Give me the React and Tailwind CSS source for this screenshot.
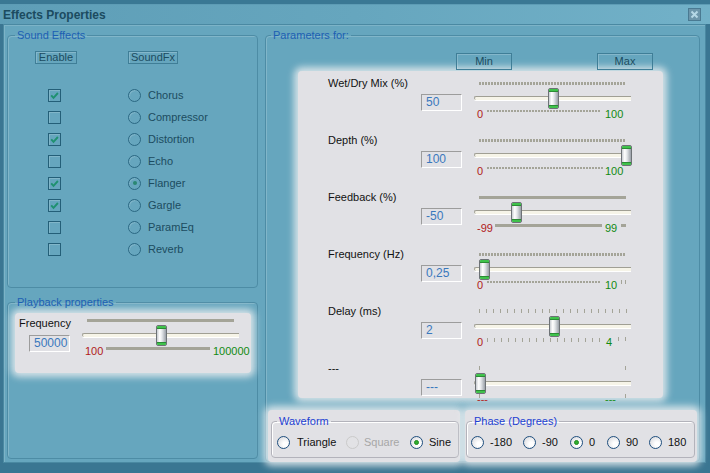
import React from "react";

function TopLine({ type }) {
  if (type === "dashed")
    return <div className="w-[147px] h-[3px] bg-[repeating-linear-gradient(90deg,#a4a498_0px,#a4a498_2px,transparent_2px,transparent_3px)]" />;
  if (type === "solid") return <div className="w-[147px] h-[3px] bg-[#a4a498]" />;
  if (type === "sparse")
    return <div className="w-[148px] h-[4px] bg-[repeating-linear-gradient(90deg,#a4a498_0px,#a4a498_1px,transparent_1px,transparent_7px)]" />;
  return (
    <div className="w-[147px] h-[4px] flex justify-between">
      <div className="w-[1px] bg-[#a4a498]" />
      <div className="w-[1px] bg-[#a4a498]" />
    </div>
  );
}

function Thumb({ left }) {
  return (
    <div
      className="absolute top-[-9px] w-[11px] h-[21px] rounded-[2px] border border-[#6d7276] bg-[linear-gradient(90deg,#c9cdd2_0%,#ffffff_30%,#e4e7ea_55%,#9aa0a8_100%)] flex flex-col justify-between overflow-hidden"
      style={{ left }}
    >
      <div className="h-[3px] bg-[#3fc24b] border-b border-[#2a8c34]" />
      <div className="h-[3px] bg-[#3fc24b] border-t border-[#2a8c34]" />
    </div>
  );
}

function Track({ pos }) {
  return (
    <div className="relative h-[4px] w-[157px] rounded-l-full border-t border-[#a09f94] border-l border-l-[#a09f94] bg-[#f6f4e8] shadow-[0_1px_0_#ffffff]">
      <Thumb left={pos} />
    </div>
  );
}

function Extra({ kind }) {
  if (kind === "block") return <div className="mt-[2px] mr-[5px] w-[5px] h-[3px] bg-[#a4a498]" />;
  if (kind === "pair")
    return (
      <div className="mt-[1px] mr-[5px] flex gap-[3px]">
        <div className="w-[1px] h-[4px] bg-[#a4a498]" />
        <div className="w-[1px] h-[4px] bg-[#a4a498]" />
      </div>
    );
  if (kind === "sparse")
    return (
      <div className="mt-[1px] mr-[5px] flex gap-[6px]">
        <div className="w-[1px] h-[4px] bg-[#a4a498]" />
        <div className="w-[1px] h-[4px] bg-[#a4a498]" />
      </div>
    );
  return null;
}

function BottomLine({ type, w }) {
  if (type === "dashed")
    return <div className={`${w} h-[2px] bg-[repeating-linear-gradient(90deg,#a4a498_0px,#a4a498_2px,transparent_2px,transparent_3px)]`} />;
  if (type === "solid") return <div className={`${w} h-[3px] bg-[#a4a498]`} />;
  if (type === "sparse")
    return <div className={`${w} h-[4px] bg-[repeating-linear-gradient(90deg,#a4a498_0px,#a4a498_1px,transparent_1px,transparent_7px)]`} />;
  return null;
}

function Slider({ pos, top, bottom, minBox, lineW, maxPl, min, max, extra }) {
  return (
    <div className="w-[157px] flex flex-col">
      <div className="h-[5px] flex items-end pl-[5px]">
        <TopLine type={top} />
      </div>
      <div className="mt-[11px]">
        <Track pos={pos} />
      </div>
      {bottom === "ends" ? (
        <>
          <div className="mt-[9px] pl-[5px]">
            <TopLine type="ends" />
          </div>
          <div className="mt-[-5px] flex h-[13px] leading-[13px]">
            <div className={`${minBox} pl-[3px] text-[#b01a1a]`}>{min}</div>
            <div className={`${maxPl} text-[#128a12]`}>{max}</div>
          </div>
        </>
      ) : (
        <div className="mt-[8px] flex items-start h-[13px] leading-[13px]">
          <div className={`${minBox} shrink-0 pl-[3px] text-[#b01a1a]`}>{min}</div>
          <div className="mt-[2px] shrink-0">
            <BottomLine type={bottom} w={lineW} />
          </div>
          <div className={`${maxPl} shrink-0 text-[#128a12]`}>{max}</div>
          <div className="flex-1" />
          <Extra kind={extra} />
        </div>
      )}
    </div>
  );
}

function Input({ value }) {
  return (
    <div className="w-[41px] h-[17px] border border-t-[#9c9c9c] border-l-[#9c9c9c] border-b-white border-r-white pl-[4px] text-[12px] leading-[15px] text-[#3a78bd]">
      {value}
    </div>
  );
}

function TealCheck({ on }) {
  return (
    <span className="w-[13px] h-[13px] border border-[#245f78] shadow-[inset_1px_1px_0_rgba(255,255,255,0.18)] flex items-center justify-center">
      {on && (
        <svg width="9" height="9" viewBox="0 0 9 9">
          <path d="M1.2 4.3 L3.5 6.8 L7.9 2" stroke="#1f9170" strokeWidth="1.9" fill="none" />
        </svg>
      )}
    </span>
  );
}

function TealRadio({ on }) {
  return (
    <span className="w-[13px] h-[13px] rounded-full border-[1.5px] border-[#2b6883] shadow-[inset_1px_1px_0_rgba(255,255,255,0.15)] flex items-center justify-center">
      {on && <span className="w-[4px] h-[4px] rounded-full bg-[#2a8772]" />}
    </span>
  );
}

function LRadio({ on, disabled }) {
  return (
    <span
      className={`w-[13px] h-[13px] rounded-full border flex items-center justify-center shrink-0 ${
        disabled
          ? "border-[#cacaca] bg-[#e2e2e5]"
          : "border-[#1f4f7e] bg-[radial-gradient(circle_at_65%_65%,#ffffff_20%,#d3d4d9_100%)]"
      }`}
    >
      {on && <span className="w-[5px] h-[5px] rounded-full bg-[#2fae2f] border border-[#1f8a1f]" />}
    </span>
  );
}

const effects = [
  ["Chorus", true, false],
  ["Compressor", false, false],
  ["Distortion", true, false],
  ["Echo", false, false],
  ["Flanger", true, true],
  ["Gargle", true, false],
  ["ParamEq", false, false],
  ["Reverb", false, false],
];

const params = [
  { label: "Wet/Dry Mix (%)", value: "50", pos: 73, top: "dashed", bottom: "dashed", minBox: "w-[13px]", lineW: "w-[114px]", maxPl: "pl-[4px]", min: "0", max: "100" },
  { label: "Depth (%)", value: "100", pos: 146, top: "dashed", bottom: "dashed", minBox: "w-[13px]", lineW: "w-[116px]", maxPl: "pl-[2px]", min: "0", max: "100" },
  { label: "Feedback (%)", value: "-50", pos: 36, top: "solid", bottom: "solid", minBox: "w-[21px]", lineW: "w-[107px]", maxPl: "pl-[3px]", min: "-99", max: "99", extra: "block" },
  { label: "Frequency (Hz)", value: "0,25", pos: 4, top: "dashed", bottom: "dashed", minBox: "w-[13px]", lineW: "w-[114px]", maxPl: "pl-[4px]", min: "0", max: "10", extra: "pair" },
  { label: "Delay (ms)", value: "2", pos: 74, top: "sparse", bottom: "sparse", minBox: "w-[13px]", lineW: "w-[113px]", maxPl: "pl-[6px]", min: "0", max: "4", extra: "sparse" },
  { label: "---", value: "---", pos: 0, top: "ends", bottom: "ends", minBox: "w-[131px]", lineW: "", maxPl: "", min: "---", max: "---" },
];

const glow = "bg-[#e1e1e5] rounded-[4px] shadow-[0_0_7px_4px_rgba(232,236,239,0.85)]";

export default function App() {
  return (
    <div className="w-[710px] h-[473px] bg-[#3a7692] overflow-hidden font-['Liberation_Sans',Arial,sans-serif] text-[11px]">
      <div className="h-[5px] bg-[#3a7894] border-b border-[#5d9cb5]" />
      <div className="h-[19px] flex items-center justify-between pl-[3px] pr-[9px] bg-[linear-gradient(90deg,#5e9eb7,#66a6be_50%,#72b1c8)]">
        <span className="font-bold text-[12px] text-[#1b4b60] leading-[14px]">Effects Properties</span>
        <div className="w-[13px] h-[13px] border border-[#4a7a92] bg-[#6c96ab] flex items-center justify-center">
          <svg width="9" height="9" viewBox="0 0 9 9">
            <path d="M1.5 1.5 L7.5 7.5 M7.5 1.5 L1.5 7.5" stroke="#b5d8e6" strokeWidth="2" />
          </svg>
        </div>
      </div>
      <div className="ml-[3px] w-[703px] h-[439px] border border-[#4a89a2] bg-[#66a6be] flex pt-[4px] pl-[3px] gap-[7px] shadow-[inset_1px_1px_0_rgba(255,255,255,0.15)]">
        <div className="w-[251px] flex flex-col">
          <fieldset className="h-[259px] border border-[#4d8ca5] rounded-[4px] shadow-[inset_1px_1px_0_rgba(255,255,255,0.18)]">
            <legend className="ml-[7px] px-[2px] leading-[13px] text-[#1d5fb3]">Sound Effects</legend>
            <div className="mt-[9px] flex text-[#1c4c60]">
              <div className="ml-[27px] w-[42px] h-[13px] border border-[#3f7e97] shadow-[inset_1px_1px_0_rgba(255,255,255,0.2)] text-center leading-[11px]">Enable</div>
              <div className="ml-[51px] w-[50px] h-[13px] border border-[#3f7e97] shadow-[inset_1px_1px_0_rgba(255,255,255,0.2)] text-center leading-[11px]">SoundFx</div>
            </div>
            <div className="mt-[20px] flex flex-col">
              {effects.map(([name, on, sel]) => (
                <div key={name} className="h-[22px] flex items-center text-[#1c4c60]">
                  <div className="ml-[40px]">
                    <TealCheck on={on} />
                  </div>
                  <div className="ml-[67px]">
                    <TealRadio on={sel} />
                  </div>
                  <span className="ml-[7px] leading-[13px]">{name}</span>
                </div>
              ))}
            </div>
          </fieldset>
          <fieldset className="mt-[8px] h-[163px] border border-[#4d8ca5] rounded-[4px] shadow-[inset_1px_1px_0_rgba(255,255,255,0.18)]">
            <legend className="ml-[7px] px-[2px] leading-[13px] text-[#1d5fb3]">Playback properties</legend>
            <div className={`ml-[7px] mt-[4px] w-[236px] h-[60px] ${glow} flex`}>
              <div className="w-[67px] flex flex-col">
                <span className="ml-[4px] mt-[4px] leading-[13px] text-[#111]">Frequency</span>
                <div className="ml-[14px] mt-[5px]">
                  <Input value="50000" />
                </div>
              </div>
              <div className="mt-[4px]">
                <Slider pos={73} top="solid" bottom="solid" minBox="w-[24px]" lineW="w-[104px]" maxPl="pl-[3px]" min="100" max="100000" />
              </div>
            </div>
          </fieldset>
        </div>

        <fieldset className="w-[435px] h-[433px] border border-[#4d8ca5] rounded-[4px] shadow-[inset_1px_1px_0_rgba(255,255,255,0.18)]">
          <legend className="ml-[5px] px-[2px] leading-[13px] text-[#1d5fb3]">Parameters for:</legend>
          <div className="mt-[11px] flex h-[17px] text-[#1c4c60]">
            <div className="ml-[190px] w-[56px] h-[17px] border border-[#3f7e97] shadow-[inset_1px_1px_0_rgba(255,255,255,0.2)] text-center leading-[15px]">Min</div>
            <div className="ml-[85px] w-[56px] h-[17px] border border-[#3f7e97] shadow-[inset_1px_1px_0_rgba(255,255,255,0.2)] text-center leading-[15px]">Max</div>
          </div>
          <div className={`ml-[32px] mt-[1px] w-[365px] h-[327px] pt-[5px] ${glow} flex flex-col`}>
            {params.map((p) => (
              <div key={p.label} className="h-[57px] shrink-0 flex">
                <div className="w-[176px] flex flex-col">
                  <span className="ml-[30px] h-[14px] leading-[14px] text-[#111]">{p.label}</span>
                  <div className="ml-[123px] mt-[4px]">
                    <Input value={p.value} />
                  </div>
                </div>
                <div className="mt-[4px]">
                  <Slider {...p} />
                </div>
              </div>
            ))}
          </div>
          <div className="mt-[12px] flex">
            <div className={`ml-[2px] w-[192px] h-[52px] ${glow} pt-[5px] pl-[3px]`}>
              <fieldset className="w-[188px] h-[43px] border border-[#b3b3bb] rounded-[4px] shadow-[inset_1px_1px_0_#ffffff]">
                <legend className="ml-[5px] px-[2px] leading-[13px] text-[#1d3fd2]">Waveform</legend>
                <div className="mt-[8px] flex items-center h-[13px] leading-[13px] text-[#111]">
                  <div className="ml-[5px] w-[69px] flex items-center">
                    <LRadio />
                    <span className="ml-[7px]">Triangle</span>
                  </div>
                  <div className="w-[64px] flex items-center">
                    <LRadio disabled />
                    <span className="ml-[5px] text-[#a7a7a7]">Square</span>
                  </div>
                  <div className="flex items-center">
                    <LRadio on />
                    <span className="ml-[6px]">Sine</span>
                  </div>
                </div>
              </fieldset>
            </div>
            <div className={`ml-[5px] w-[232px] h-[52px] ${glow} pt-[5px] pl-[1px]`}>
              <fieldset className="w-[229px] h-[43px] border border-[#b3b3bb] rounded-[4px] shadow-[inset_1px_1px_0_#ffffff]">
                <legend className="ml-[5px] px-[2px] leading-[13px] text-[#1d3fd2]">Phase (Degrees)</legend>
                <div className="mt-[8px] flex items-center h-[13px] leading-[13px] text-[#111]">
                  <div className="ml-[4px] w-[52px] flex items-center">
                    <LRadio />
                    <span className="ml-[6px]">-180</span>
                  </div>
                  <div className="w-[47px] flex items-center">
                    <LRadio />
                    <span className="ml-[6px]">-90</span>
                  </div>
                  <div className="w-[37px] flex items-center">
                    <LRadio on />
                    <span className="ml-[6px]">0</span>
                  </div>
                  <div className="w-[42px] flex items-center">
                    <LRadio />
                    <span className="ml-[6px]">90</span>
                  </div>
                  <div className="flex items-center">
                    <LRadio />
                    <span className="ml-[6px]">180</span>
                  </div>
                </div>
              </fieldset>
            </div>
          </div>
        </fieldset>
      </div>
    </div>
  );
}
